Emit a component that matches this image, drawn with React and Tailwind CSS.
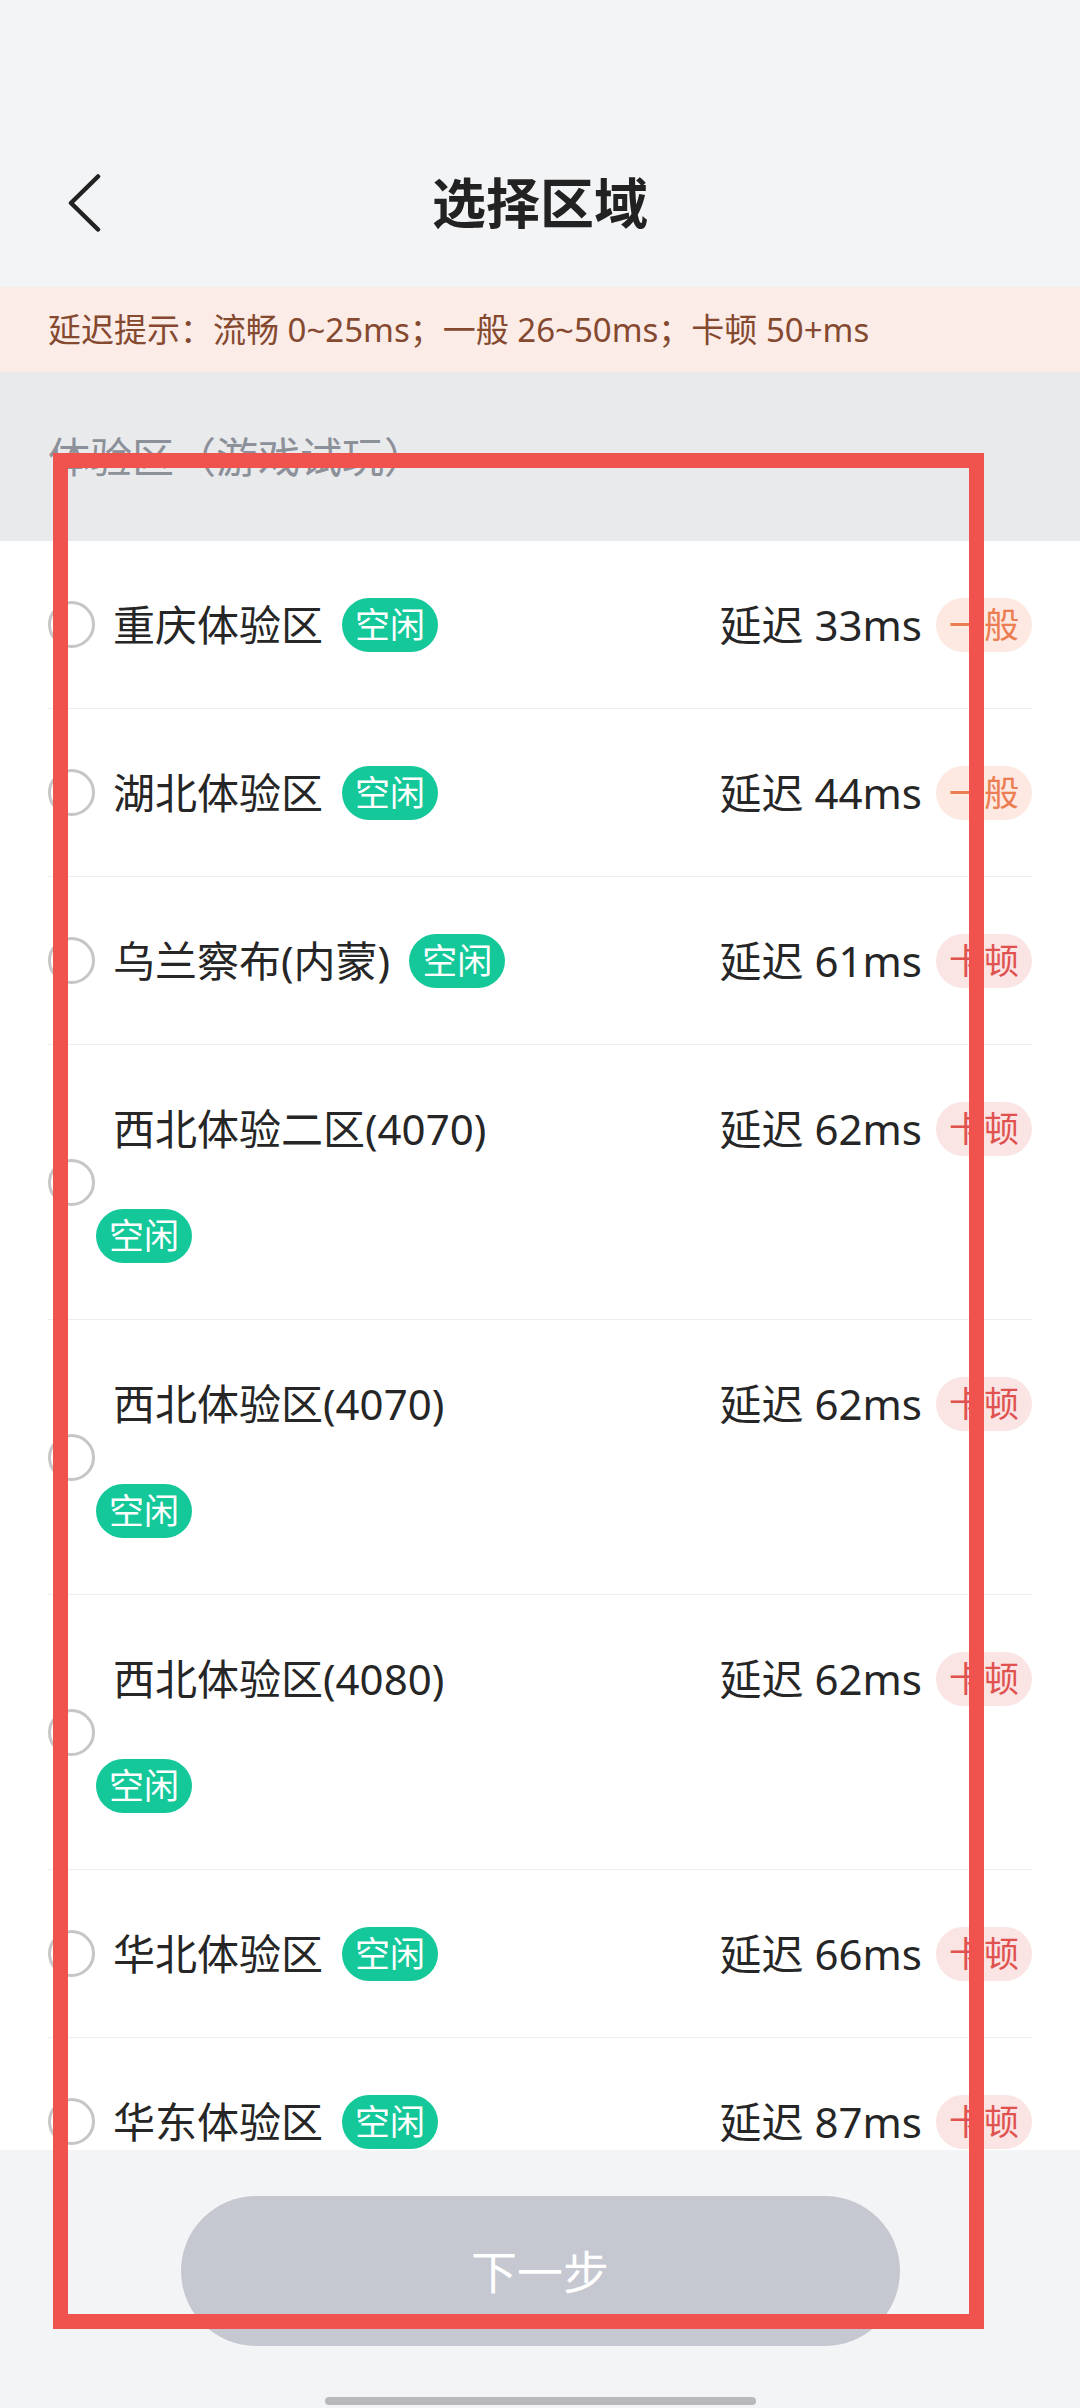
import React from "react";

const rows = [
  { name: "重庆体验区", ms: 33, level: "一般" },
  { name: "湖北体验区", ms: 44, level: "一般" },
  { name: "乌兰察布(内蒙)", ms: 61, level: "卡顿" },
  { name: "西北体验二区(4070)", ms: 62, level: "卡顿" },
  { name: "西北体验区(4070)", ms: 62, level: "卡顿" },
  { name: "西北体验区(4080)", ms: 62, level: "卡顿" },
  { name: "华北体验区", ms: 66, level: "卡顿" },
  { name: "华东体验区", ms: 87, level: "卡顿" },
];

function LevelTag({ level }) {
  const cls =
    level === "一般"
      ? "bg-[#fde9e1] text-[#ec7c52]"
      : "bg-[#fbe4e4] text-[#e0524f]";
  return (
    <span
      className={
        "ml-[14px] h-[54px] px-[13px] rounded-full text-[35px] leading-none flex items-center " +
        cls
      }
    >
      {level}
    </span>
  );
}

function Row({ name, ms, level }) {
  return (
    <div className="mx-[48px] flex border-b border-[#eeeeee] py-[30px]">
      <div className="w-[48px] shrink-0 self-center flex items-center">
        <div className="w-[47px] h-[47px] rounded-full border-[3px] border-[#c6c6c6]" />
      </div>
      <div className="w-[440px] flex flex-wrap items-center">
        <span className="h-[107px] flex items-center ml-[17px] mr-[19px] text-[42px] leading-none text-[#262626] whitespace-nowrap">
          {name}
        </span>
        <span className="h-[107px] flex items-center">
          <span className="h-[54px] px-[13px] rounded-full bg-[#14c89a] text-white text-[35px] leading-none flex items-center">
            空闲
          </span>
        </span>
      </div>
      <div className="ml-auto h-[107px] flex items-center">
        <span className="text-[42px] leading-none text-[#262626] whitespace-nowrap">
          延迟 {ms}ms
        </span>
        <LevelTag level={level} />
      </div>
    </div>
  );
}

export default function App() {
  return (
    <div className="relative w-[1080px] h-[2408px] overflow-hidden flex flex-col bg-white font-['Noto_Sans','Noto_Sans_CJK_SC',sans-serif]">
      {/* header */}
      <div className="bg-[#f3f4f6] shrink-0">
        <div className="h-[118px]" />
        <div className="h-[169px] grid grid-cols-[1fr_auto_1fr] items-center">
          <div className="pl-[67px] flex items-center">
            <svg width="36" height="58" viewBox="0 0 36 58" fill="none">
              <path
                d="M31 2.5 L4 29 L31 55.5"
                stroke="#222222"
                strokeWidth="4.5"
                strokeLinecap="round"
                strokeLinejoin="round"
              />
            </svg>
          </div>
          <div className="text-[54px] font-bold text-[#222222] leading-none">
            选择区域
          </div>
          <div />
        </div>
      </div>

      {/* latency hint banner */}
      <div className="shrink-0 h-[85px] bg-[#fcece8] flex items-center pl-[48px] text-[33px] leading-none text-[#84492f] whitespace-nowrap">
        延迟提示：流畅 0~25ms；一般 26~50ms；卡顿 50+ms
      </div>

      {/* scroll region */}
      <div className="flex-1 min-h-0 overflow-hidden">
        <div className="h-[169px] bg-[#e9eaec] flex items-center pl-[48px] text-[42px] leading-none text-[#8c9099]">
          体验区（游戏试玩）
        </div>
        {rows.map((r, i) => (
          <Row key={i} {...r} />
        ))}
      </div>

      {/* bottom bar */}
      <div className="shrink-0 h-[258px] bg-[#f3f4f6] flex flex-col items-center">
        <button className="mt-[46px] w-[719px] h-[150px] rounded-full bg-[#c5c8d0] text-white text-[46px] leading-none flex items-center justify-center">
          下一步
        </button>
        <div className="mt-[51px] w-[431px] h-[8px] rounded-full bg-[#b9b9bb]" />
      </div>

      {/* annotation overlay */}
      <div className="absolute left-[53px] top-[453px] w-[931px] h-[1876px] border-[15px] border-[#f0524e] pointer-events-none" />
    </div>
  );
}
